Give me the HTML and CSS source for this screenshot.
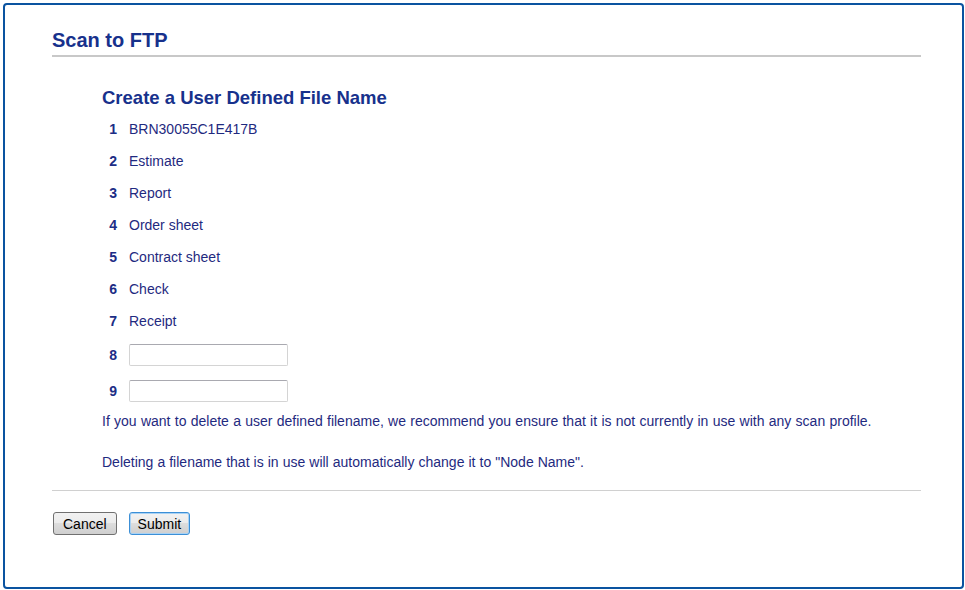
FILE: index.html
```html
<!DOCTYPE html>
<html>
<head>
<meta charset="utf-8">
<link rel="stylesheet" href="styles.css">
</head>
<body>
<div class="frame">
  <h1 class="title">Scan to FTP</h1>
  <div class="content">
    <h2 class="subtitle">Create a User Defined File Name</h2>
    <div class="list">
      <div class="row"><span class="num">1</span><span class="val">BRN30055C1E417B</span></div>
      <div class="row"><span class="num">2</span><span class="val">Estimate</span></div>
      <div class="row"><span class="num">3</span><span class="val">Report</span></div>
      <div class="row"><span class="num">4</span><span class="val">Order sheet</span></div>
      <div class="row"><span class="num">5</span><span class="val">Contract sheet</span></div>
      <div class="row"><span class="num">6</span><span class="val">Check</span></div>
      <div class="row"><span class="num">7</span><span class="val">Receipt</span></div>
      <div class="row input-row"><span class="num">8</span><input class="field" type="text"></div>
      <div class="row input-row"><span class="num">9</span><input class="field" type="text"></div>
    </div>
    <p class="note first">If you want to delete a user defined filename, we recommend you ensure that it is not currently in use with any scan profile.</p>
    <p class="note second">Deleting a filename that is in use will automatically change it to "Node Name".</p>
  </div>
  <div class="rule"></div>
  <div class="actions">
    <button class="btn">Cancel</button>
    <button class="btn primary">Submit</button>
  </div>
</div>
</body>
</html>
```

FILE: styles.css
```css
html, body {
  margin: 0;
  padding: 0;
  background: #ffffff;
}
body {
  padding: 3px 1px 1px 3px;
  font-family: "Liberation Sans", Arial, sans-serif;
  color: #1f2a80;
}
.frame {
  box-sizing: border-box;
  height: 586px;
  border: 2px solid #0a53a0;
  border-radius: 4px;
  padding: 22px 41px 0 47px;
}
.title {
  margin: 0;
  font-size: 20px;
  line-height: 26px;
  font-weight: bold;
  color: #17318c;
  padding-bottom: 2px;
  border-bottom: 2px solid #c8c8c8;
}
.content {
  padding-left: 50px;
}
.subtitle {
  margin: 30px 0 0 0;
  font-size: 18.5px;
  line-height: 22px;
  font-weight: bold;
  color: #17318c;
}
.list {
  margin-top: 4px;
  display: flex;
  flex-direction: column;
}
.row {
  display: flex;
  align-items: center;
  height: 32px;
  font-size: 14px;
}
.num {
  width: 15px;
  text-align: right;
  font-weight: bold;
  font-size: 14px;
  color: #1c2d86;
  margin-right: 12px;
}
.val {
  color: #1f2a80;
}
.input-row {
  height: 36px;
}
.field {
  box-sizing: border-box;
  width: 159px;
  height: 22px;
  margin: 0;
  border: 1px solid #d4d4d4;
  border-top-color: #a9a9b0;
  border-radius: 2px;
  background: #fff;
  padding: 0 4px;
}
.note {
  margin: 0;
  font-size: 14px;
  line-height: 18px;
  color: #1f2a80;
}
.note.first {
  margin-top: 3px;
  word-spacing: 0.4px;
}
.note.second {
  margin-top: 23px;
  word-spacing: 0.15px;
}
.rule {
  margin-top: 19px;
  height: 1px;
  background: #d0d0d0;
}
.actions {
  display: flex;
  gap: 12px;
  margin-top: 21px;
  padding-left: 1px;
}
.btn {
  box-sizing: border-box;
  height: 23px;
  padding: 0 9px;
  font-family: "Liberation Sans", Arial, sans-serif;
  font-size: 14px;
  color: #000;
  border: 1px solid #707070;
  border-radius: 3px;
  background: linear-gradient(#f2f2f2 0%, #ebebeb 50%, #dddddd 50%, #cfcfcf 100%);
}
.btn.primary {
  padding: 0 8px;
  border-color: #3c8fd6;
  box-shadow: inset 0 0 0 1px #a8d2f5;
}
```
